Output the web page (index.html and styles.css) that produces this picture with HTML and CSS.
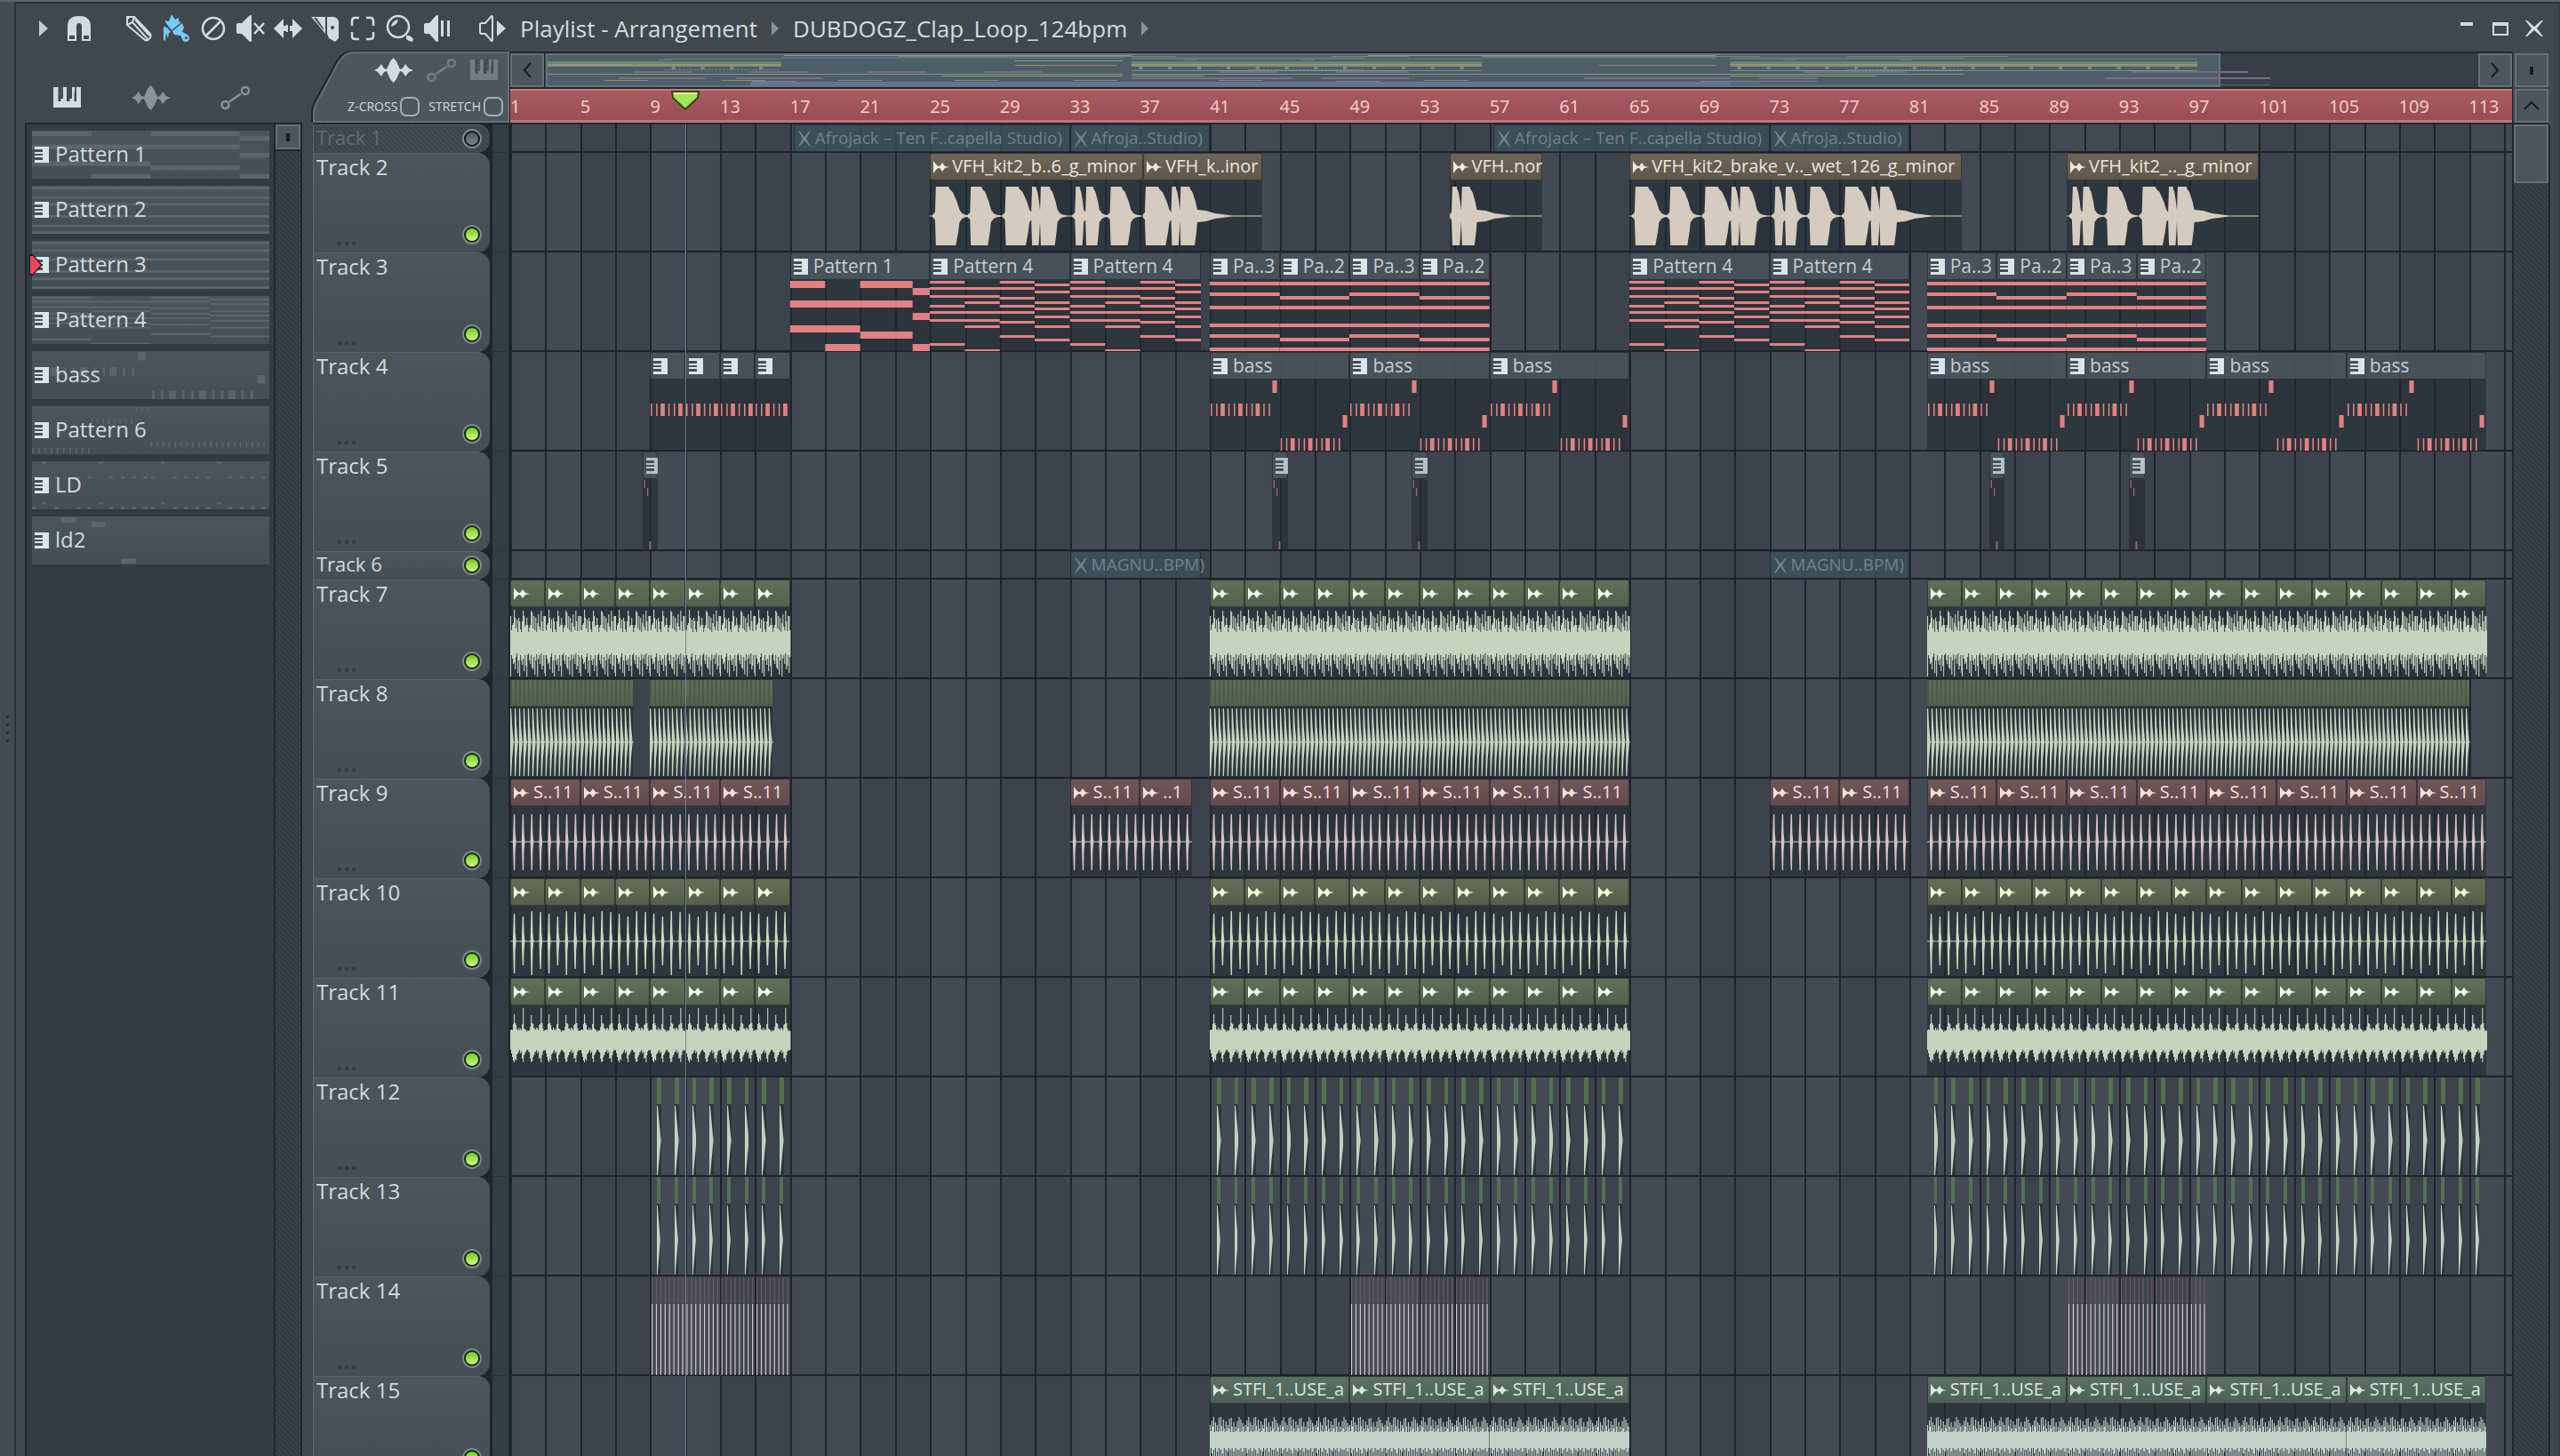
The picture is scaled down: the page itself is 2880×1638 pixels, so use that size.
FILE: index.html
```html
<!DOCTYPE html>
<html lang="en">
<head>
<meta charset="utf-8">
<title>Playlist - Arrangement</title>
<link rel="stylesheet" href="styles.css">
</head>
<body>
<svg class="defs" aria-hidden="true">
  <symbol id="i-piano" viewBox="0 0 32 24"><path d="M0 0H7V13H11V0H10L8 10V0H16L18 10V0H17V13H21V0H31V23H0Z"/><path class="key" d="M5.500 0H10L8.500 7V16H5.500ZM15 0H20L18.500 7V16H15ZM24.500 0H26V16H23.500V8Z"/></symbol>
  <symbol id="i-wave" viewBox="0 0 44 28"><path d="M0 14L4 12L8 7L11 12L14 13L18 4L21.500 0L25 4L29 13L32 12L35 7L39 12L44 14L39 16L35 21L32 16L29 15L25 24L21.500 28L18 24L14 15L11 16L8 21L4 16Z"/></symbol>
  <symbol id="i-auto" viewBox="0 0 34 28"><g fill="none" stroke="currentColor" stroke-width="2.500"><circle cx="5.500" cy="22" r="4"/><circle cx="28" cy="6" r="4"/><path d="M10 18.500L23 9.500"/></g></symbol>
  <symbol id="i-audio" viewBox="0 0 18 14"><path d="M0 0L4 5L6 6H7L10 2L13 6L18 7L13 8L10 12L7 8H6L4 9L0 14Z"/></symbol>
  <symbol id="i-mute" viewBox="0 0 16 18"><path d="M1 0L3 1L8 7L13 1L15 0L10 9L15 18L13 17L8 11L3 17L1 18L6 9Z"/></symbol>
  <symbol id="i-pat" viewBox="0 0 16 18"><path d="M0 0H16V18H0V15H9V12H0V10H9V8H0V6H9V3H0Z"/><path class="key" d="M0 4H7V5.500H0ZM0 12.500H7V14H0Z"/></symbol>
</svg>

<main class="window">
  <div class="grip" aria-hidden="true"><i></i><i></i><i></i><i></i></div>
  <div class="content">
    <header class="titlebar">
      <button class="menu" aria-label="Menu"><svg viewBox="0 0 10 18" width="10" height="18"><path d="M0 0L10 9L0 18Z"/></svg></button>
      <button class="tool magnet" aria-label="Snap"><svg viewBox="0 0 32 32"><path fill-rule="evenodd" d="M3 30V14C3 5 8 2 16 2S29 5 29 14V30H19V14C19 11 18 10 16 10S13 11 13 14V30ZM5 24V28H11V24ZM21 24V28H27V24Z"/></svg></button>
      <div class="tools">
        <button class="tool" aria-label="Draw"><svg viewBox="0 0 32 32"><g fill="none" stroke="currentColor" stroke-width="2"><path d="M3 3H11L29 22C31 25 27 31 23 29L3 12ZM11 3L9 9L3 12M9 9L26 28M12 6L28 24"/></g><path d="M2 2H8L2 8Z"/></svg></button>
        <button class="tool on" aria-label="Paint"><svg viewBox="0 0 32 32"><path d="M11 0L15 6L19 4L19 8L22 9L11 18L7 13L3 7L8 8ZM12 19L23 10L25 15L23 20L27 22C33 24 32 32 26 31C23 30 23 27 21 24L14 23ZM2 14L6 15L10 20L8 21L7 27L5 21L4 30L2 29Z"/><circle class="hole" cx="27.500" cy="26.500" r="1.500"/></svg></button>
        <button class="tool" aria-label="Delete"><svg viewBox="0 0 32 32"><g fill="none" stroke="currentColor" stroke-width="2.500"><circle cx="16" cy="16" r="12"/><path d="M8 24L24 8"/></g></svg></button>
        <button class="tool" aria-label="Mute"><svg viewBox="0 0 32 32"><path d="M0 12Q0 10 2 10H6L14 2Q15 1 17 1V31Q15 31 14 30L6 22H2Q0 22 0 20Z"/><path d="M20 10L31 22M31 10L20 22" fill="none" stroke="currentColor" stroke-width="2.500"/></svg></button>
        <button class="tool" aria-label="Slip"><svg viewBox="0 0 32 32"><path d="M0 16L11 5V13H14V19H11V27ZM32 16L21 5V13H18V19H21V27Z"/><path d="M14 12H16V20H14Z"/></svg></button>
        <button class="tool" aria-label="Slice"><svg viewBox="0 0 32 32"><path fill-rule="evenodd" d="M18 3H26Q32 5 31 12V27L27 31L20 27L18 22ZM24 13A2 2 0 1 0 24.100 17A2 2 0 1 0 24 13Z"/><path d="M0 3H16V22L8 12Z"/><path class="key" d="M3 4L14 18L14 16L6 4Z"/></svg></button>
        <button class="tool" aria-label="Select"><svg viewBox="0 0 32 32"><path fill="none" stroke="currentColor" stroke-width="2.500" d="M12 4H7Q4 4 4 8V13M20 4H25Q28 4 28 8V13M4 20V25Q4 28 8 28H12M28 20V25Q28 28 24 28H20"/></svg></button>
        <button class="tool" aria-label="Zoom"><svg viewBox="0 0 32 32"><circle cx="14" cy="14" r="12" fill="none" stroke="currentColor" stroke-width="2.500"/><path d="M6 14Q7 7 14 6Q13 12 6 14Z"/><path d="M23 24Q27 23 31 28L30 31Q26 31 23 28Z"/></svg></button>
        <button class="tool" aria-label="Playback"><svg viewBox="0 0 32 32"><path d="M1 12Q1 10 3 10H7L14 2Q15 1 17 1V31Q15 31 14 30L7 22H3Q1 22 1 20ZM20 7H23V25H20ZM27 7H30V25H27Z"/></svg></button>
      </div>
      <h1 class="crumbs">
        <svg viewBox="0 0 30 32" width="30" height="32"><path fill="none" stroke="currentColor" stroke-width="2" d="M1 12Q1 10 3 10H7L14 2Q15 2 15 3V29Q15 30 14 30L7 22H3Q1 22 1 20Z"/><path d="M20 7L30 16L20 25Z"/></svg>
        <span>Playlist - Arrangement</span>
        <svg class="sep" viewBox="0 0 8 16" width="8" height="16"><path d="M0 0L8 8L0 16Z"/></svg>
        <span>DUBDOGZ_Clap_Loop_124bpm</span>
        <svg class="sep" viewBox="0 0 8 16" width="8" height="16"><path d="M0 0L8 8L0 16Z"/></svg>
      </h1>
      <div class="winctl">
        <button aria-label="Minimise"><svg viewBox="0 0 20 20" width="20" height="20"><path d="M3 3H17V7H3Z"/></svg></button>
        <button aria-label="Maximise"><svg viewBox="0 0 20 20" width="20" height="20"><path fill-rule="evenodd" d="M1 3H19V18H1ZM3 7V16H17V7Z"/></svg></button>
        <button aria-label="Close"><svg viewBox="0 0 20 20" width="20" height="20"><path d="M0 1L2 1L10 8L18 1L20 1L13 10L20 19L18 19L10 12L2 19L0 19L7 10Z"/></svg></button>
      </div>
    </header>

    <div class="workspace">
      <aside class="picker">
        <nav class="picker-tabs">
          <button class="lit" aria-label="Patterns"><svg width="32" height="24"><use href="#i-piano"/></svg></button>
          <button aria-label="Audio"><svg width="44" height="28"><use href="#i-wave"/></svg></button>
          <button aria-label="Automation"><svg width="34" height="28"><use href="#i-auto"/></svg></button>
        </nav>
        <div class="picker-body">
          <ul class="patterns">
            <li data-pat="p1"><svg class="pi"><use href="#i-pat"/></svg><span>Pattern 1</span></li>
            <li data-pat="p2"><svg class="pi"><use href="#i-pat"/></svg><span>Pattern 2</span></li>
            <li data-pat="p3" class="current"><svg class="pi"><use href="#i-pat"/></svg><span>Pattern 3</span></li>
            <li data-pat="p4"><svg class="pi"><use href="#i-pat"/></svg><span>Pattern 4</span></li>
            <li data-pat="bass"><svg class="pi"><use href="#i-pat"/></svg><span>bass</span></li>
            <li data-pat="p6"><svg class="pi"><use href="#i-pat"/></svg><span>Pattern 6</span></li>
            <li data-pat="ld"><svg class="pi"><use href="#i-pat"/></svg><span>LD</span></li>
            <li data-pat="ld2"><svg class="pi"><use href="#i-pat"/></svg><span>ld2</span></li>
          </ul>
          <div class="vscroll small"><button class="sq" aria-label="Scroll patterns"><i></i></button><div class="hatch"></div></div>
        </div>
      </aside>

      <section class="playlist">
        <div class="top">
          <div class="corner">
            <svg class="corner-shape" viewBox="0 0 222 80" preserveAspectRatio="none"><path d="M1 79V69Q1 65 4 58L29 12Q36 1 46 1H221V79Z"/></svg>
            <div class="modes">
              <button class="lit" aria-label="Clips"><svg width="44" height="28"><use href="#i-wave"/></svg></button>
              <button aria-label="Automation"><svg width="34" height="28"><use href="#i-auto"/></svg></button>
              <button aria-label="Keys"><svg width="32" height="24"><use href="#i-piano"/></svg></button>
            </div>
            <div class="checks">
              <label>Z-CROSS<input type="checkbox"></label>
              <label>STRETCH<input type="checkbox"></label>
            </div>
          </div>
          <div class="nav">
            <div class="overview">
              <button class="sq" aria-label="Scroll left"><svg viewBox="0 0 10 18" width="10" height="18"><path d="M9 1L2 9L9 17"/></svg></button>
              <div class="map"><div class="view"><svg id="map" preserveAspectRatio="none"></svg></div></div>
              <button class="sq" aria-label="Scroll right"><svg viewBox="0 0 10 18" width="10" height="18"><path d="M1 1L8 9L1 17"/></svg></button>
            </div>
            <div class="ruler" id="ruler"></div>
          </div>
          <div class="corner-right">
            <button class="sq" aria-label="View"><i></i></button>
            <button class="sq" aria-label="Scroll up"><svg viewBox="0 0 18 10" width="18" height="10"><path d="M1 9L9 1L17 9"/></svg></button>
          </div>
        </div>
        <div class="main">
          <div class="tracks">
            <div class="canvas"><svg id="grid"></svg></div>
            <div id="rows"></div>
            <div class="canvas over"><div class="playhead" id="playhead"></div></div>
          </div>
          <div class="vscroll"><div class="thumb"></div><div class="hatch"></div></div>
        </div>
      </section>
    </div>
  </div>
</main>
<script src="app.js"></script>
</body>
</html>
```
FILE: styles.css
```css
* { box-sizing: border-box; }
body {
  margin: 0;
  background: #40484e;
  color: #d3dbe0;
  font: 24px/30px "Open Sans", "Noto Sans", sans-serif;
}
button { padding: 0; border: 0; background: none; color: inherit; font: inherit; display: grid; place-items: center; }
svg { display: block; fill: currentColor; }
ul { list-style: none; margin: 0; padding: 0; }
.defs { position: absolute; width: 0; height: 0; }
.key { fill: #414a50; }

.window { display: flex; height: 100vh; overflow: hidden; border-top: 2px solid #5a666d; }
.grip { width: 18px; flex: none; background: #444c53; border-right: 2px solid #2b333a; display: flex; flex-direction: column; justify-content: center; align-items: center; gap: 6px; }
.grip i { width: 3px; height: 3px; background: #2b333a; }
.content { flex: 1; min-width: 0; display: flex; flex-direction: column; border-top: 2px solid #2b333a; border-right: 2px solid #343b41; padding-right: 11px; }

/* title bar */
.titlebar { height: 54px; flex: none; display: flex; align-items: center; padding: 2px 0 0 26px; }
.menu { width: 10px; color: #c3cbd0; }
.tool { width: 42px; height: 42px; }
.tool svg { width: 32px; height: 32px; }
.magnet { margin-left: 14px; }
.tools { display: flex; margin-left: 25px; }
.tool.on { color: #77cbff; }
.hole { fill: #40484e; }
.crumbs { display: flex; align-items: center; gap: 16px; margin: 0 0 0 26px; font-size: 26px; font-weight: 400; }
.crumbs .sep { color: #8b9398; }
.winctl { margin-left: auto; display: flex; gap: 18px; padding-right: 6px; }

.workspace { flex: 1; min-height: 0; display: flex; gap: 12px; padding-left: 10px; }

/* pattern picker */
.picker { width: 312px; flex: none; display: flex; flex-direction: column; }
.picker-tabs { height: 80px; flex: none; display: flex; align-items: center; gap: 56px; padding: 24px 0 0 32px; color: #8b9398; }
.lit { color: #d3dbe0; }
.picker-body { flex: 1; min-height: 0; display: flex; border: 2px solid #1f272f; border-bottom: 0; background: #313b43; }
.patterns { flex: 1; display: flex; flex-direction: column; gap: 8px; padding: 7px 5px 0 6px; }
.patterns li { position: relative; height: 54px; display: flex; align-items: center; gap: 7px; padding-left: 3px; background: linear-gradient(#4c555b, #454e54); }
.patterns li > * { position: relative; }
.patterns span { padding-bottom: 3px; }
.patterns .notes { position: absolute; left: 0; top: 0; width: 100%; height: 100%; color: #5c656c; }
.pi { width: 16px; height: 18px; flex: none; color: #dbe5ec; }
.current::before { content: ""; position: absolute; z-index: 1; left: -3px; top: 15px; width: 15px; height: 24px; background: #1a2026; clip-path: polygon(0 0, 25% 0, 100% 50%, 25% 100%, 0 100%); }
.current::after { content: ""; position: absolute; z-index: 1; left: -2px; top: 17px; width: 12px; height: 20px; background: #ee4560; clip-path: polygon(0 0, 25% 0, 100% 50%, 25% 100%, 0 100%); }

/* scroll bars */
.sq { width: 38px; height: 38px; border: 2px solid #656f75; background: #4d565d; }
.sq svg { fill: none; stroke: #161c22; stroke-width: 2; }
.sq i { width: 4px; height: 9px; background: #161c22; }
.hatch { flex: 1; background: repeating-linear-gradient(45deg, #32393f 0 2px, #3a4248 2px 4px); }
.vscroll { width: 41px; flex: none; display: flex; flex-direction: column; border-left: 2px solid #1f272f; }
.vscroll.small { width: 30px; }
.small .sq { width: 28px; height: 28px; }
.small .hatch { border-top: 2px solid #1f272f; }
.thumb { height: 66px; flex: none; border: 2px solid #656f75; background: #4d565d; }

/* playlist */
.playlist { flex: 1; min-width: 0; display: flex; flex-direction: column; }
.top { display: flex; height: 82px; flex: none; border-bottom: 2px solid #1f272f; }
.corner { position: relative; width: 222px; flex: none; border-right: 1px solid #1f272f; }
.corner-shape { position: absolute; inset: 0; width: 100%; height: 100%; fill: #4d565d; stroke: #656f75; stroke-width: 2; filter: drop-shadow(-2px -1px 0 #1f272f); }
.modes { position: relative; display: flex; align-items: center; gap: 15px; padding: 7px 0 0 69px; color: #737d83; }
.modes .lit { color: #d3dbe0; }
.modes .key { fill: #4d565d; }
.checks { position: relative; display: flex; justify-content: flex-end; gap: 10px; padding: 16px 7px 0 0; }
.checks label { display: flex; align-items: center; gap: 3px; font-size: 14px; font-weight: 500; line-height: 22px; }
.checks input { appearance: none; margin: 0; width: 22px; height: 22px; border: 2px solid #a6afb3; border-radius: 7px; }
.nav { flex: 1; min-width: 0; }
.overview { display: flex; height: 42px; border-top: 2px solid #1f272f; border-bottom: 2px solid #1f272f; background: #373e45; }
.map { flex: 1; padding: 0 290px 0 1px; border-left: 1px solid #1f272f; }
.view { height: 38px; border: 2px solid #63757c; background: #4c5f66; }
.view svg { width: 100%; height: 34px; overflow: visible; }
.ruler { position: relative; display: flex; height: 38px; overflow: hidden; background: linear-gradient(#a65c60, #984e52); border-top: 2px solid #cb7c7c; border-bottom: 3px solid #c27578; color: #fbd0d4; font-size: 20px; line-height: 36px; }
.ruler span { flex: none; }
.marker { position: absolute; top: 0; height: 22px; width: 34px; }
.corner-right { width: 41px; flex: none; display: flex; flex-direction: column; gap: 2px; padding: 2px 0 0 2px; border-left: 1px solid #1f272f; }
.main { flex: 1; min-height: 0; display: flex; border-right: 2px solid #1f272f; margin-right: -2px; }
.tracks { position: relative; flex: 1; min-width: 0; overflow: hidden; background: linear-gradient(90deg, #1b262d 0 202px, #323e46 202px 220px, #1b262d 220px); }
.canvas { position: absolute; top: 0; bottom: 0; left: 222px; right: 0; }
.canvas svg { width: 100%; height: 100%; }
.over { pointer-events: none; }
.playhead { position: absolute; top: 0; bottom: 0; width: 1px; background: #708090; }

.row { position: relative; display: flex; height: 112px; }
.row.short { height: 32px; }
.head { position: relative; width: 199px; margin-right: 23px; flex: none; border-left: 1px solid #5b656b; border-top: 1px solid #566067; border-radius: 0 14px 14px 0; padding: 0 0 0 3px; background: linear-gradient(#4c555b, #454e54); }
.short .head { font-size: 22px; line-height: 27px; }
.off .head { background: repeating-linear-gradient(45deg, #3b4449 0 2px, #434c52 2px 4px); color: #626c72; }
.led { appearance: none; position: absolute; right: 9px; bottom: 9px; margin: 0; width: 22px; height: 22px; border-radius: 50%; border: 2px solid #80898d; background: #12300c; }
.led::after { content: ""; display: block; margin: 2px; width: 14px; height: 14px; border-radius: 50%; background: linear-gradient(#74cf18, #d2f58c); }
.short .led { bottom: 5px; }
.off .led { background: #14181b; }
.off .led::after { background: linear-gradient(#50585d, #7b8488); }
.dots { position: absolute; left: 27px; bottom: 8px; display: flex; gap: 4px; }
.dots i { width: 4px; height: 4px; background: #353c42; }
.short .dots { display: none; }
.lane { position: relative; flex: 1; min-width: 0; border-bottom: 2px solid #1b222b; }
.row::after { content: ""; position: absolute; left: 202px; width: 20px; bottom: 0; height: 1px; background: #27343c; }

.clip { position: absolute; top: 0; bottom: -1px; overflow: hidden; }
.cap { height: 31px; display: flex; align-items: center; gap: 6px; padding-left: 3px; border: 1px solid rgba(20, 27, 32, .55); border-radius: 3px; font-size: 20px; line-height: 28px; white-space: nowrap; }
.cap svg { flex: none; width: 16px; height: 18px; }
.cap span { padding-bottom: 2px; }
.cap .au { width: 18px; height: 14px; }
.body { height: 80px; background: rgba(33, 41, 48, .6); }
.body svg { width: 100%; height: 80px; }
.pat .cap { background: rgba(73, 82, 88, .95); color: #c3ced5; font-size: 21px; }
.pat .cap svg { color: #dbe5ec; }
.pat .body { color: #e38182; }
.faint .cap svg { opacity: .75; }
.faint .body { color: #a06468; }
.muted { overflow: visible; }
.muted .cap { gap: 4px; background: rgba(58, 80, 90, .8); color: #6f838c; font-size: 19px; }
.muted .body { display: none; }
.vox .cap { gap: 3px; background: linear-gradient(#6e6557, #5f574a); color: #ece7e0; }
.vox .body { color: #d5cbbf; }
.green, .olive { overflow: visible; }
.green .body svg { width: calc(100% + 1px); }
.green .cap { background: linear-gradient(#5f7059, #52624c); color: #e8fbe4; }
.green .body { color: #c6d4be; }
.olive .cap { background: linear-gradient(#656d56, #575f49); color: #f4fbdc; }
.olive .body { color: #cdd6bc; }
.rose .cap { gap: 4px; background: linear-gradient(#705659, #624a4d); color: #f7dfe0; }
.rose .body { color: #d8c2c4; }
.sage .cap { gap: 4px; background: linear-gradient(#5a7065, #4d6157); color: #dbe9e1; }
.sage .body { color: #bfd3c8; }
.strip .cap { border-width: 1px 0; border-radius: 0; padding: 0; overflow: hidden; }
.strip .cap svg { width: 100%; height: 29px; color: #4a5a44; }
.hit .cap { border-width: 0 0 1px; border-radius: 0; background: #547052; padding: 0; }
.hit .body { color: #bdd3bf; }
.pins .cap { border: 0; padding: 0; background: none; }
.pins .cap svg { width: 100%; height: 29px; color: #75566a; }
.pins .body { background: none; color: #dfc5d5; }
```
FILE: app.js
```js
const SPAN = 114.46;                       // bars visible in the arrangement
const pct = bars => (bars / SPAN * 100) + '%';
const H = 80, MID = 40, U = 20;            // clip body height, centre line, units per bar

const rect = (x, y, w, h) => `M${x.toFixed(2)} ${y}h${w.toFixed(2)}v${h}h${(-w).toFixed(2)}z`;

/* ---- piano-roll previews: [start bar, length, top, height] ---- */
const stripe = (start, len, ys, h) => ys.map(y => [start, len, y, h]);
const bassRun = (at, y) => [.05, .36, .62, 1.06, 1.37, 1.63, 2.07, 2.38, 2.62, 3.06, 3.37]
  .map((b, i) => [at + b, i % 3 === 2 ? .24 : .08, y, 14]);
const chordA = [2, 14, 29, 49, 61, 76];
const chordB = [2, 18, 29, 49, 65, 76];
const PATTERNS = {
  p1: { bars: 8, notes: [[0, 2, 1, 8], [4, 3, 1, 8], [7, 1, 9, 8], [0, 7, 23, 8], [7, 1, 37, 8], [0, 4, 51, 8], [4, 3, 58, 8], [2, 2, 72, 8], [7, 1, 72, 8]] },
  p2: { bars: 4, notes: stripe(0, 4, chordB, 4) },
  p3: { bars: 4, notes: stripe(0, 4, chordA, 4) },
  p4: { bars: 8, notes: [
    ...stripe(0, 2, [1, 8, 17, 28, 35, 44, 71], 3), ...stripe(2, 2, [8, 17, 24, 35, 44, 51, 78], 3),
    ...stripe(4, 2, [1, 8, 19, 28, 35, 46, 62], 3), ...stripe(6, 2, [4, 12, 24, 31, 40, 51, 66], 3)] },
  bass: { bars: 8, notes: [...bassRun(0, 27), [3.58, .26, 1, 14], ...bassRun(4, 66), [7.6, .26, 40, 14]] },
  bassShort: { bars: 2, notes: bassRun(0, 27).filter(n => n[0] < 2) },
  fill: { bars: .9, notes: [[.08, .07, 1, 9], [.25, .07, 10, 9], [.38, .1, 70, 9]] },
  p6: { bars: 8, notes: [
    ...Array.from({ length: 10 }, (_, i) => [i * .21, .05, 69, 10]), ...Array.from({ length: 8 }, (_, i) => [2 + i * .19, .05, 20, 10]),
    ...Array.from({ length: 3 }, (_, i) => [3.5 + i * .19, .05, 1, 9]), ...Array.from({ length: 20 }, (_, i) => [4 + i * .2, .05, 59, 10])] },
  ld: { bars: 8, notes: [
    ...[.35, 2.25, 4.35, 6.25].flatMap(b => [[b, .13, 0, 4], [b, .13, 68, 4]]),
    ...[0, .75, 1.5, 1.87, 2.6, 3, 3.37, 3.75, 4, 4.75, 5.12, 5.5, 5.87, 6.62, 7, 7.37, 7.75].flatMap(b => [[b, .13, 25, 4], [b, .13, 76, 4]])] },
  ld2: { bars: 8, notes: [[1, .5, 1, 9], [2, .5, 9, 9], [3, .5, 70, 9]] }
};
const notePath = p => p.notes.map(n => rect(n[0] * U, n[2], n[1] * U, n[3])).join('');
const noteSvg = (p, cls = '', bars = p.bars) =>
  `<svg class="${cls}" viewBox="0 0 ${bars * U} ${H}" preserveAspectRatio="none"><path d="${notePath(p)}"/></svg>`;

/* ---- audio waveforms ---- */
const svg = (bars, d) => `<svg viewBox="0 0 ${bars * U} ${H}" preserveAspectRatio="none"><path d="${d}"/></svg>`;
const line = bars => rect(0, MID - .5, bars * U, 1);

function loopWave(bars, top, bottom) {
  let d = '';
  const n = top.length, w = 40 / n;
  for (let i = 0; i * w < bars * U; i++)
    d += rect(i * w, MID - top[i % n], w + .1, top[i % n] + bottom[i % n]);
  return svg(bars, d);
}
const DENSE_T = [30, 14, 20, 22, 37, 28, 16, 26, 12, 28, 24, 15, 12, 24, 36, 30, 18, 20, 28, 20, 12, 17, 20, 36, 34, 16, 30, 14, 28, 12, 22, 32, 18, 14, 36, 24, 13, 30, 30, 14];
const DENSE_B = [38, 14, 18, 24, 22, 30, 16, 12, 34, 20, 38, 14, 20, 25, 18, 32, 14, 26, 38, 14, 12, 20, 24, 14, 28, 30, 16, 36, 20, 13, 38, 18, 14, 24, 12, 30, 26, 14, 34, 16];
const SOFT_T = [12, 13, 12, 19, 30, 20, 18, 13, 12, 15, 12, 14, 12, 19, 37, 14, 13, 12, 10, 12, 11, 12, 16, 29, 20, 19, 14, 14, 12, 15, 14, 12, 18, 19, 37, 20, 14, 11, 12, 11];
const SOFT_B = [10, 14, 18, 22, 24, 20, 22, 15, 14, 12, 10, 14, 12, 20, 24, 16, 14, 12, 10, 10, 12, 13, 20, 24, 23, 18, 16, 13, 12, 10, 14, 12, 20, 19, 24, 16, 12, 10, 11, 10];
const HISS_T = [16, 9, 21, 14, 25, 8, 19, 9, 16, 8, 24, 9, 25, 15, 9, 22, 12, 8, 20, 9, 16, 12, 23, 8, 24, 14, 8, 19, 8, 14, 9, 20, 12, 25, 8, 22, 9, 18, 14, 8];
const HISS_B = [22, 10, 16, 26, 12, 20, 10, 28, 14, 22, 10, 26, 12, 20, 16, 28, 10, 22, 12, 26, 14, 10, 24, 12, 28, 10, 20, 14, 26, 10, 22, 12, 28, 12, 20, 10, 26, 14, 22, 10];

function spikes(bars, tops, bottoms) {
  let d = line(bars);
  for (let i = 0, b = .22; b < bars; b += .5, i++) {
    const x = b * U, t = tops[i % tops.length], u = bottoms[i % bottoms.length];
    d += `M${x - 1.4} ${MID}L${x - .4} ${MID - t}H${x + 1}L${x + 1.4} ${MID - 10}L${x + 2.4} ${MID}L${x + 1.4} ${MID + 10}L${x + 1} ${MID + u}H${x - .4}Z`;
  }
  return svg(bars, d);
}
function clapRun(bars) {
  let d = line(bars);
  for (let x = 0; x < bars * U - 1; x += 5)
    d += `M${x} ${MID - 38}h1.2L${x + 2.2} ${MID - 18}L${x + 4} ${MID}L${x + 2.2} ${MID + 18}L${x + 1.2} ${MID + 38}h-1.200z`;
  return svg(bars, d);
}
const hitWave = bars => svg(bars, `M0 1H${bars * 4}L${bars * 17} 34Q${bars * 22} 40 ${bars * 17} 46L${bars * 4} 79H0Z`);
const pins = (bars, h) => {
  let d = '';
  for (let x = 2; x < bars * U; x += 5) d += rect(x, 0, 1.2, h);
  return `<svg viewBox="0 0 ${bars * U} ${h}" preserveAspectRatio="none"><path d="${d}"/></svg>`;
};
/* vocal chops: [start bar, length, has long tail] */
function vocal(from, to, hits) {
  let d = line(to - from);
  hits.forEach(([b, len, tail]) => {
    const x = (b - from) * U, w = len * U, k = tail ? 40 : 12, e = tail ? 6 : 3;
    d += `M${x - 3} 39L${x} 36L${x + 1} 7H${x + w * .55}L${x + w * .6} 10L${x + w * .72} 13L${x + w * .9} 24L${x + w} 33L${x + w + k * .25} ${40 - e}L${x + w + k * .5} ${40 - e / 2}L${x + w + k} 39.500V40.500L${x + w + k * .5} ${40 + e / 2}L${x + w + k * .25} ${40 + e}L${x + w} 47L${x + w * .95} 58L${x + w * .85} 73H${x + 1}L${x} 44L${x - 3} 41Z`;
  });
  return svg(to - from, d);
}

/* ---- clips ---- */
const cap = (icon, label = '') => `<div class="cap"><svg class="${icon === 'audio' ? 'au' : ''}"><use href="#i-${icon}"/></svg>${label ? `<span>${label}</span>` : ''}</div>`;
const clip = (cls, from, to, capHtml, body) =>
  `<div class="clip ${cls}" style="left:${pct(from - 1)};width:${pct(to - from)}">${capHtml}<div class="body">${body}</div></div>`;
const pat = (key, from, to, label, cls = '') => clip('pat ' + cls, from, to, cap('pat', label), noteSvg(PATTERNS[key], '', to - from));
const mute = (from, to, label) => clip('muted', from, to, cap('mute', label), '');
const series = (ranges, step, make) => ranges.map(([a, b]) => {
  let out = '';
  for (let x = a; x < b; x += step) out += make(x, Math.min(x + step, b));
  return out;
}).join('');

const FULL = [[1, 17], [41, 65], [82, 114]];
const LATE = [[9, 17], [41, 65], [82, 114]];
const vox = (from, to, label, hits) => clip('vox', from, to, cap('audio', label), vocal(from, to, hits));
const phrase = b => [[b + .3, 1.4], [b + 2.3, 1.2], [b + 4.3, 1.4], [b + 5.8, .5], [b + 6.3, 1]];
const verse = b => [[b + .3, .5], [b + .9, .7], [b + 2.3, 1.2], [b + 4.3, 1.4], [b + 5.8, .5], [b + 6.3, 1, true]];

const stripCap = bars => {
  let d = '';
  for (let x = 0; x < bars * U; x += 5) d += rect(x, 0, 2, 29);
  return `<div class="cap"><svg viewBox="0 0 ${bars * U} 29" preserveAspectRatio="none"><path d="${d}"/></svg></div>`;
};
const hits = w => series(LATE, 1, x => clip('hit', x + .4, x + .4 + w, '<div class="cap"></div>', hitWave(w)));

const TRACKS = [
  mute(17.2, 33, 'Afrojack – Ten F..capella Studio)') + mute(33, 41, 'Afroja..Studio)') + mute(57.2, 73, 'Afrojack – Ten F..capella Studio)') + mute(73, 81, 'Afroja..Studio)'),
  vox(25, 37.2, 'VFH_kit2_b..6_g_minor', [...phrase(25), [33.3, .5], [33.9, .8], [35.3, 1.2]]) +
    vox(37.2, 44, 'VFH_k..inor', [[37.3, 1.4], [38.8, .5], [39.3, 1, true]]) +
    vox(54.7, 60, 'VFH..nor', [[54.8, .55], [55.35, .9, true]]) +
    vox(65, 84, 'VFH_kit2_brake_v.._wet_126_g_minor', [...phrase(65), ...verse(73)]) +
    vox(90, 101, 'VFH_kit2_.._g_minor', verse(90)),
  pat('p1', 17, 25, 'Pattern 1') + pat('p4', 25, 33, 'Pattern 4') + pat('p4', 33, 40.5, 'Pattern 4') +
    [41, 49, 82, 90].map(b => pat('p3', b, b + 4, 'Pa..3') + pat('p2', b + 4, b + 8, 'Pa..2')).join('') +
    pat('p4', 65, 73, 'Pattern 4') + pat('p4', 73, 81, 'Pattern 4'),
  series([[9, 17]], 2, (a, b) => pat('bassShort', a, b, '')) + series([[41, 65], [82, 114]], 8, (a, b) => pat('bass', a, b, 'bass')),
  [8.55, 44.55, 52.55, 85.55, 93.55].map(b => pat('fill', b, b + .9, '', 'faint')).join(''),
  mute(33, 40.5, 'MAGNU..BPM)') + mute(73, 81, 'MAGNU..BPM)'),
  series(FULL, 2, (a, b) => clip('green', a, b, cap('audio'), loopWave(2, DENSE_T, DENSE_B))),
  [[1, 8], [9, 16], [41, 65], [82, 113]].map(([a, b]) => clip('green strip', a, b, stripCap(b - a), clapRun(b - a))).join(''),
  series([[1, 17], [33, 37], [41, 65], [73, 81], [82, 114]], 4, (a, b) => clip('rose', a, b, cap('audio', 'S..11'), spikes(b - a, [31], [32]))) +
    clip('rose', 37, 40, cap('audio', '..1'), spikes(3, [31], [32])),
  series(FULL, 2, (a, b) => clip('olive', a, b, cap('audio'), spikes(2, [31, 28, 34, 33], [36, 27, 38, 31]))),
  series(FULL, 2, (a, b) => clip('green', a, b, cap('audio'), loopWave(2, SOFT_T, SOFT_B))),
  hits(.24),
  hits(.2),
  [[9, 17], [49, 57], [90, 98]].map(([a, b]) => clip('pins', a, b, `<div class="cap">${pins(b - a, 29)}</div>`, pins(b - a, 80))).join(''),
  series([[41, 65], [82, 114]], 8, (a, b) => clip('sage', a, b, cap('audio', 'STFI_1..USE_a'), loopWave(8, HISS_T, HISS_B)))
];

document.getElementById('rows').innerHTML = TRACKS.map((clips, i) => {
  const n = i + 1, off = n === 1, short = off || n === 6;
  return `<div class="row${short ? ' short' : ''}${off ? ' off' : ''}">
    <div class="head"><label for="t${n}">Track ${n}</label><input class="led" type="checkbox" id="t${n}"${off ? '' : ' checked'}><span class="dots"><i></i><i></i><i></i></span></div>
    <div class="lane">${clips}</div></div>`;
}).join('');

/* ---- grid, ruler and playhead ---- */
let g = '<rect width="100%" height="100%" fill="#3c434c"/>';
for (let b = 0; b < SPAN; b += 8) g += `<rect x="${pct(b)}" width="${pct(4)}" height="100%" fill="#434a54"/>`;
for (let b = 0; b < SPAN; b += 2) g += `<rect x="${pct(b)}" width="2" height="100%" fill="#1c242d" shape-rendering="crispEdges"/>`;
document.getElementById('grid').innerHTML = g;
document.getElementById('playhead').style.left = pct(10);

let r = '';
for (let b = 1; b < SPAN; b += 4) r += `<span style="width:${pct(4)}">${b}</span>`;
r += `<svg class="marker" viewBox="0 0 34 22" style="left:calc(${pct(10)} - 17px)"><path d="M2 1H32L31 8L17 21L3 8Z" fill="#a5e35a" stroke="#2c4a12" stroke-width="2"/><path d="M4 3H30" stroke="#eaffa0" stroke-width="2"/></svg>`;
document.getElementById('ruler').innerHTML = r;

/* ---- pattern picker previews ---- */
document.querySelectorAll('.patterns li').forEach(li => {
  li.insertAdjacentHTML('afterbegin', noteSvg(PATTERNS[li.dataset.pat], 'notes'));
});

/* ---- overview: [top, height, colour, ranges] ---- */
const every = (first, len, step, last) => { const o = []; for (let b = first; b < last; b += step) o.push([b, b + len]); return o; };
const MAP = [
  [0, 1, '#7c969e', [[17.2, 41], [57.2, 81]]], [1, 1, '#87806f', [[25, 44], [54.7, 60], [65, 84], [90, 101]]],
  [2, 2, '#5d727a', [[17, 40.5], [41, 57], [65, 81], [82, 98]]], [4, 1, '#657b83', LATE], [5, 1, '#657b83', [[8.6, 9.5], [44.6, 45.5], [52.6, 53.5], [85.6, 86.500], [93.6, 94.5]]],
  [7, 3, '#6d8471', FULL], [10, 1, '#8d9c7c', FULL], [11, 1, '#9a8280', [...FULL, [33, 40], [73, 81]]], [12, 1, '#7f9273', FULL],
  [13, 3, '#76917b', [...every(9.5, .25, 2, 17), ...every(41.5, .25, 2, 65), ...every(82.5, .25, 2, 114)]],
  [6, 1, '#7ba29d', [[33, 40.4]]],
  [16, 1, '#8a8691', [...every(9, .12, .25, 17), ...every(49, .12, .25, 57), ...every(90, .12, .25, 98)]],
  [18, 2, '#746f86', [...every(6.9, 4, 8, 36), [47, 51], [55, 60], [87, 94], [109.5, 117.5]]], [17, 1, '#739480', [[41, 65], [82, 114]]],
  [21, 1, '#84967a', [[1, 40.4], [41, 98]]], [23, 1, '#85a072', [[28, 40.4], [41, 46], [82, 92]]],
  [25, 2, '#766f88', [[5.9, 11.8], [13.9, 19.8], [41, 52], [54, 60], [72, 82], [84, 88], [107.7, 119]]],
  [28, 1, '#8d8a75', [...every(4.9, 3, 8, 30), [37, 40], [47, 50], [61, 64]]], [29, 1, '#73868c', [[15, 18], [55, 58], [80, 88]]],
  [30, 4, '#67749b', [[14.9, 82]]], [31, 1, '#67749b', [[82, 84]]], [33, 1, '#615f85', [[82, 119]]]
];
const map = document.getElementById('map');
map.setAttribute('viewBox', `0 0 ${SPAN} 34`);
map.innerHTML = MAP.map(([y, h, c, rs]) => `<path fill="${c}" d="${rs.map(([a, b]) => rect(a - 1, y, b - a, h)).join('')}"/>`).join('');
```
